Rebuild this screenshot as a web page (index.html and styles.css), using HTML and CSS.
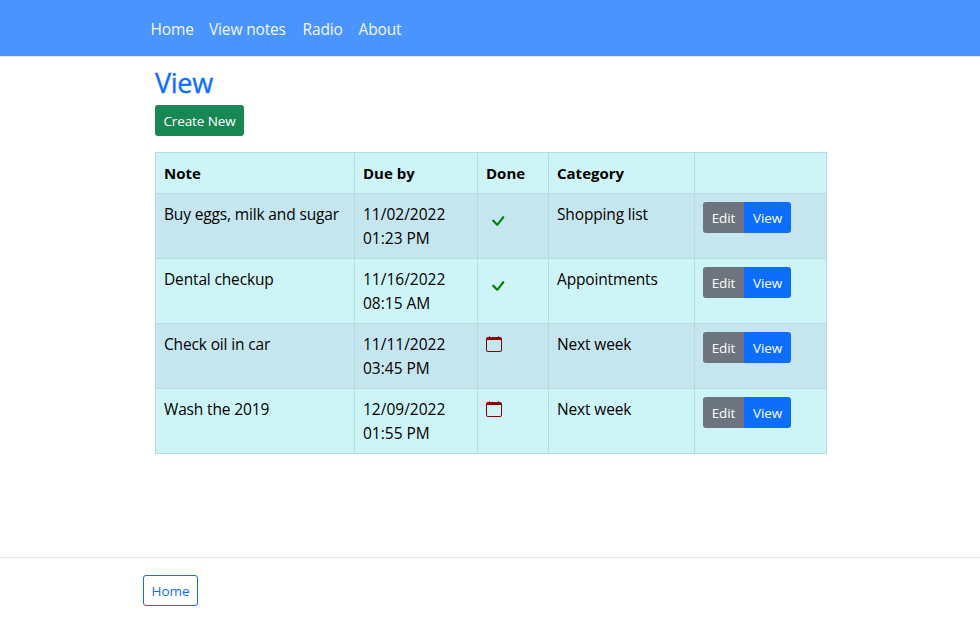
FILE: index.html
```html
<!DOCTYPE html>
<html lang="en">
<head>
<meta charset="utf-8">
<title>View</title>
<link rel="stylesheet" href="styles.css">
</head>
<body>
<svg class="defs" aria-hidden="true">
<symbol id="check" viewBox="0 0 16 16"><path d="M10.97 4.97a.75.75 0 0 1 1.07 1.05l-3.99 4.99a.75.75 0 0 1-1.08.02L4.324 8.384a.75.75 0 1 1 1.06-1.06l2.094 2.093 3.473-4.425z"/></symbol>
<symbol id="calendar" viewBox="0 0 16 16"><path d="M3.5 0a.5.5 0 0 1 .5.5V1h8V.5a.5.5 0 0 1 1 0V1h1a2 2 0 0 1 2 2v11a2 2 0 0 1-2 2H2a2 2 0 0 1-2-2V3a2 2 0 0 1 2-2h1V.5a.5.5 0 0 1 .5-.5zM1 4v10a1 1 0 0 0 1 1h12a1 1 0 0 0 1-1V4H1z"/></symbol>
</svg>
<header>
<nav><a class="n1">Home</a><a class="n2">View notes</a><a class="n3">Radio</a><a class="n4">About</a></nav>
</header>
<main>
<h1>View</h1>
<a class="btn create">Create New</a>
<table>
<colgroup><col class="c1"><col class="c2"><col class="c3"><col class="c4"><col class="c5"></colgroup>
<thead><tr><th>Note</th><th>Due by</th><th>Done</th><th>Category</th><th></th></tr></thead>
<tbody>
<tr><td>Buy eggs, milk and sugar</td><td class="date">11/02/2022<br>01:23 PM</td><td><svg class="check"><use href="#check"/></svg></td><td>Shopping list</td><td><div class="group"><a class="btn edit">Edit</a><a class="btn view">View</a></div></td></tr>
<tr><td>Dental checkup</td><td class="date">11/16/2022<br>08:15 AM</td><td><svg class="check"><use href="#check"/></svg></td><td>Appointments</td><td><div class="group"><a class="btn edit">Edit</a><a class="btn view">View</a></div></td></tr>
<tr><td>Check oil in car</td><td class="date">11/11/2022<br>03:45 PM</td><td><svg class="calendar"><use href="#calendar"/></svg></td><td>Next week</td><td><div class="group"><a class="btn edit">Edit</a><a class="btn view">View</a></div></td></tr>
<tr><td>Wash the 2019</td><td class="date">12/09/2022<br>01:55 PM</td><td><svg class="calendar"><use href="#calendar"/></svg></td><td>Next week</td><td><div class="group"><a class="btn edit">Edit</a><a class="btn view">View</a></div></td></tr>
</tbody>
</table>
</main>
<footer><a class="btn home">Home</a></footer>
</body>
</html>
```
FILE: styles.css
```css
* { box-sizing: border-box; }
body {
  margin: 0;
  height: 618px;
  display: flex;
  flex-direction: column;
  overflow: hidden;
  background: #fff;
  color: #000;
  font: 15.5px/24px "Open Sans", "Noto Sans", sans-serif;
  letter-spacing: -0.15px;
}
.defs { display: none; }
header {
  height: 57px;
  padding: 17px 0 0 150.5px;
  background: #4a94ff;
  border-bottom: 1px solid #dee8ee;
}
nav { display: flex; color: #f4f7ff; white-space: nowrap; }
.n1 { width: 58.5px; }
.n2 { width: 93.5px; }
.n3 { width: 56px; }
main { flex: 1; padding: 9px 0 0 155px; }
h1 {
  margin: 0 0 5px;
  height: 34px;
  font-size: 27px;
  line-height: 34px;
  font-weight: 500;
  letter-spacing: -0.3px;
  color: #0d6efd;
  -webkit-text-stroke: 0.35px #0d6efd;
}
.btn {
  display: flex;
  align-items: center;
  justify-content: center;
  height: 31px;
  padding-top: 2px;
  border-radius: 3px;
  font-size: 13.5px;
  line-height: 21px;
  letter-spacing: -0.1px;
  color: #fff;
}
.create { width: 89px; background: #198754; }
table {
  width: 672px;
  margin-top: 16px;
  table-layout: fixed;
  border-collapse: collapse;
  background: #cdf5f8;
}
.c1 { width: 199px; }
.c2 { width: 123px; }
.c3 { width: 71px; }
.c4 { width: 146px; }
.c5 { width: 132px; }
th, td {
  padding: 8px;
  border: 1px solid #b5dde0;
  text-align: left;
  vertical-align: top;
  white-space: nowrap;
}
th { height: 41px; font-weight: 700; font-size: 15px; letter-spacing: 0; }
td { height: 65px; }
.date { letter-spacing: 0; }
tbody tr:nth-child(odd) { background: #c5e6ef; }
td svg { display: block; }
.check { width: 24px; height: 24px; margin-top: 7px; fill: #008000; }
.calendar { width: 16px; height: 16px; margin-top: 4px; fill: #8b0000; }
.group { display: flex; }
.edit { width: 41px; background: #6c757d; border-radius: 3px 0 0 3px; }
.view { width: 47px; background: #0d6efd; border-radius: 0 3px 3px 0; }
footer {
  height: 61px;
  padding: 17px 0 0 143px;
  border-top: 1px solid #dee6e6;
}
.home { width: 55px; border: 1px solid #0d6efd; color: #0d6efd; }
```
